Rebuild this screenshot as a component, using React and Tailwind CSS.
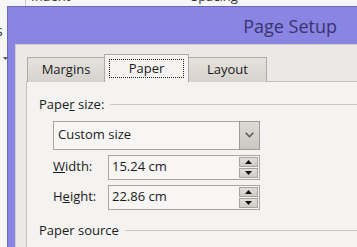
import React from "react";

function Spinner() {
  return (
    <div className="flex flex-col gap-[1px] py-[1px] pr-[1px]">
      <div className="w-[19px] h-[10px] bg-gradient-to-b from-[#e2dfdb] to-[#cfcbc7] border border-[#a7a39f] flex items-center justify-center">
        <svg width="7" height="4" viewBox="0 0 7 4">
          <path d="M0 4 L3.5 0 L7 4 Z" fill="#111" />
        </svg>
      </div>
      <div className="w-[19px] h-[10px] bg-gradient-to-b from-[#e2dfdb] to-[#cfcbc7] border border-[#a7a39f] flex items-center justify-center">
        <svg width="7" height="4" viewBox="0 0 7 4">
          <path d="M0 0 L7 0 L3.5 4 Z" fill="#111" />
        </svg>
      </div>
    </div>
  );
}

function SizeField({ label, value }) {
  return (
    <div className="flex items-center">
      <div className="w-[55px] text-[13px] text-[#1a1a1a]">{label}</div>
      <div className="w-[152px] h-[25px] border border-[#a9a6a2] bg-[#f7f6f5] flex items-center justify-between">
        <span className="pl-[3px] text-[13px] text-[#1a1a1a]">{value}</span>
        <Spinner />
      </div>
    </div>
  );
}

export default function App() {
  return (
    <div className="relative w-[357px] h-[247px] overflow-hidden bg-[#f6f6f6] font-['Open_Sans',sans-serif]">
      {/* window behind the dialog */}
      <div className="absolute left-[25px] top-0 w-px h-[7px] bg-[#c9c9c9]" />
      <span className="absolute left-[31px] top-[-13px] text-[13px] leading-[18px] text-[#333]">Indent</span>
      <span className="absolute left-[191px] top-[-13px] text-[13px] leading-[18px] text-[#333]">Spacing</span>
      <span className="absolute left-[-4px] top-[22px] text-[14px] leading-[18px] text-[#333]">s</span>
      <svg className="absolute left-[3px] top-[57px]" width="5" height="3" viewBox="0 0 5 3">
        <path d="M0 0 L5 0 L2.5 3 Z" fill="#555" />
      </svg>

      {/* dialog */}
      <div className="absolute left-[7px] top-[6px] right-0 bottom-0 flex flex-col bg-[#8a84e3] border-l border-t border-[#6d68bf]">
        <div className="h-[37px] flex items-center justify-end pr-[20px]">
          <span className="text-[18px] text-[#39346e] leading-none mt-[1px]">Page Setup</span>
        </div>
        <div className="flex-1 ml-[7px] bg-[#ebe9e6] border-l border-t border-[#d2cfcb] pl-[10px] pt-[8px] flex flex-col">
          <div className="flex items-end h-[29px] pl-[1px] relative z-10">
            <div className="w-[78px] h-[25px] bg-gradient-to-b from-[#e6e3df] to-[#d6d2cd] border border-b-0 border-[#aeaaa5] flex items-center justify-center text-[13px] text-[#1a1a1a]">
              Margins
            </div>
            <div className="w-[85px] h-[28px] -ml-[1px] bg-[#f4f3f1] border border-b-0 border-[#aeaaa5] flex items-center justify-center">
              <div className="w-[75px] h-[19px] border border-dotted border-[#222] flex items-center justify-center text-[13px] text-[#1a1a1a]">
                Paper
              </div>
            </div>
            <div className="w-[79px] h-[25px] -ml-[1px] bg-gradient-to-b from-[#e6e3df] to-[#d6d2cd] border border-b-0 border-[#aeaaa5] flex items-center justify-center text-[13px] text-[#1a1a1a]">
              Layout
            </div>
          </div>
          <div className="flex-1 -mt-[1px] bg-[#f4f3f1] border-l border-t border-[#c3c0bb] pl-[12px] pt-[13px] flex flex-col">
            <div className="flex items-center">
              <span className="text-[13px] text-[#1a1a1a]">
                Pape<u>r</u> size:
              </span>
              <div className="flex-1 h-px bg-[#c9c6c2] ml-[6px]" />
            </div>
            <div className="ml-[14px] mt-[6px] flex flex-col gap-[5px]">
              <div className="w-[207px] h-[29px] border border-[#a9a6a2] bg-[#f7f6f5] flex items-stretch">
                <div className="flex-1 flex items-center pl-[4px] text-[13px] text-[#1a1a1a]">Custom size</div>
                <div className="w-[21px] -m-px border border-[#9e9a96] bg-gradient-to-b from-[#dedad6] to-[#cbc7c3] flex items-center justify-center">
                  <svg width="9" height="6" viewBox="0 0 9 6">
                    <path d="M0.7 0.7 L4.5 4.7 L8.3 0.7" fill="none" stroke="#5a5652" strokeWidth="1.6" />
                  </svg>
                </div>
              </div>
              <SizeField label={<><u>W</u>idth:</>} value="15.24 cm" />
              <SizeField label={<>H<u>e</u>ight:</>} value="22.86 cm" />
            </div>
            <div className="flex items-center mt-[11px]">
              <span className="text-[13px] text-[#1a1a1a]">Paper source</span>
              <div className="flex-1 h-px bg-[#c9c6c2] ml-[6px]" />
            </div>
          </div>
        </div>
      </div>
    </div>
  );
}
